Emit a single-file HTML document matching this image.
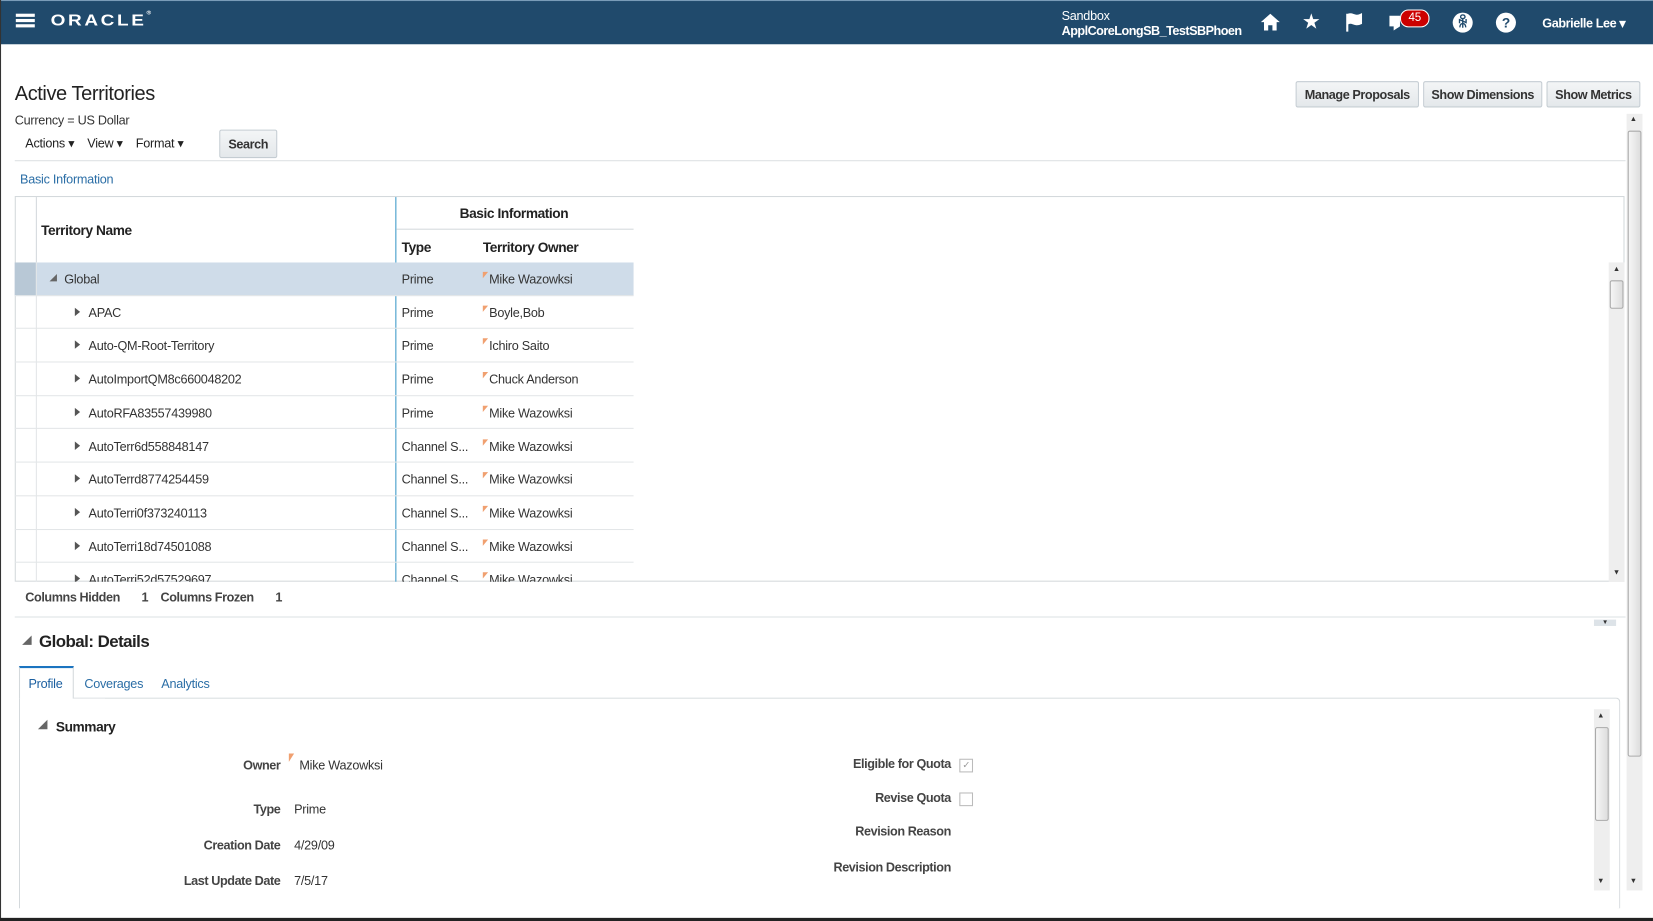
<!DOCTYPE html>
<html><head><meta charset="utf-8"><style>
body{margin:0;width:1653px;height:921px;overflow:hidden;background:#fff;font-family:"Liberation Sans",Arial,sans-serif;}
#w{position:absolute;left:0;top:0;width:1568px;height:874px;transform:scale(1.0542,1.0538);transform-origin:0 0;color:#333;font-size:12px;letter-spacing:-0.25px;}
b,.lbl,.btn{letter-spacing:-0.4px;}
.a{position:absolute;white-space:nowrap;}
.hdr{left:0;top:0;width:1568px;height:42px;background:#204a6c;border-top:1px solid #7a9cb8;box-sizing:border-box;}
.btn{position:absolute;top:77px;height:25px;border:1px solid #c4ccd2;border-radius:2px;background:linear-gradient(#f3f5f6,#e4e8eb);font-weight:bold;font-size:12px;color:#333;line-height:25px;text-align:center;box-sizing:border-box;}
.row{position:absolute;left:14px;width:587px;height:31.7px;border-bottom:1px solid #e3e6e8;box-sizing:border-box;}
.row span{position:absolute;top:9px;}
.tri{display:inline-block;width:0;height:0;border-left:5px solid #555;border-top:4px solid transparent;border-bottom:4px solid transparent;}
.flag{position:absolute;width:0;height:0;border-top:6px solid #f0a070;border-right:5px solid transparent;}
.sb{position:absolute;background:#eee;}
.thumb{position:absolute;background:linear-gradient(90deg,#f6f6f6,#ddd);border:1px solid #aaa;border-radius:2px;box-sizing:border-box;}
.lbl{position:absolute;font-weight:bold;color:#444;text-align:right;white-space:nowrap;}
</style></head><body><div id="w">
<div class="a hdr"></div>
<div class="a" style="left:15px;top:13px;width:18px;height:3px;background:#fff;box-shadow:0 5px 0 #fff,0 10px 0 #fff"></div>
<div class="a" style="left:48px;top:9px;color:#fff;font-size:18px;font-weight:bold;letter-spacing:2.5px;transform:scaleY(0.85)">ORACLE<span style="font-size:6px;vertical-align:top">®</span></div>
<div class="a" style="left:1007px;top:8px;color:#fff;font-size:12px">Sandbox</div>
<div class="a" style="left:1007px;top:22px;color:#fff;font-size:12px;font-weight:bold;letter-spacing:-0.5px">ApplCoreLongSB_TestSBPhoen</div>
<svg class="a" style="left:1195px;top:12px" width="20" height="18"><path d="M10 1L1 9h3v8h4v-5h4v5h4V9h3z" fill="#fff"/></svg>
<div class="a" style="left:1235px;top:8px;color:#fff;font-size:20px">★</div>
<svg class="a" style="left:1275px;top:11px" width="20" height="20"><path d="M3 2v17M4 3c4-2 6 3 12 0v8c-6 3-8-2-12 0z" stroke="#fff" stroke-width="2" fill="#fff"/></svg>
<svg class="a" style="left:1315px;top:13px" width="18" height="18"><path d="M3 2h10v10l-6 4v-4H3z" fill="#fff"/></svg>
<div class="a" style="left:1328px;top:9px;width:26px;height:15px;border-radius:8px;background:#c00;border:1px solid #fff;color:#fff;font-size:11px;text-align:center;line-height:15px">45</div>
<div class="a" style="left:1378px;top:12px;width:19px;height:19px;border-radius:50%;background:#fff;color:#204a6c;font-size:14px;text-align:center;line-height:19px;font-weight:bold">ꆜ</div>
<div class="a" style="left:1419px;top:12px;width:19px;height:19px;border-radius:50%;background:#fff;color:#204a6c;font-size:13px;text-align:center;line-height:19px;font-weight:bold">?</div>
<div class="a" style="left:1463px;top:15px;color:#fff;font-weight:bold;font-size:12px;letter-spacing:-0.4px">Gabrielle Lee ▾</div>

<div class="a" style="left:14px;top:79px;font-size:19px;color:#222;letter-spacing:-0.4px">Active Territories</div>
<div class="a" style="left:14px;top:107px;font-size:12px">Currency = US Dollar</div>
<div class="a" style="left:24px;top:129px;color:#222">Actions ▾ &nbsp;&nbsp;&nbsp;View ▾ &nbsp;&nbsp;&nbsp;Format ▾</div>
<div class="btn" style="left:208px;top:123px;width:55px;height:27px;line-height:27px">Search</div>
<div class="btn" style="left:1229px;width:117px">Manage Proposals</div>
<div class="btn" style="left:1350px;width:113px">Show Dimensions</div>
<div class="btn" style="left:1467px;width:89px">Show Metrics</div>
<div class="a" style="left:14px;top:152px;width:1528px;height:1px;background:#dde1e4"></div>
<div class="a" style="left:19px;top:163px;color:#2b6ea6">Basic Information</div>

<div class="a" style="left:14px;top:186px;width:1527px;height:366px;border:1px solid #d4d9dc;box-sizing:border-box"></div>
<div class="a" style="left:34px;top:187px;width:1px;height:62px;background:#d4d9dc"></div>
<div class="a" style="left:375px;top:187px;width:1px;height:365px;background:#3c9ac8"></div>
<div class="a" style="left:376px;top:217px;width:225px;height:1px;background:#d4d9dc"></div>
<div class="a" style="left:39px;top:211px;font-weight:bold;font-size:13px;color:#222;letter-spacing:-0.4px">Territory Name</div>
<div class="a" style="left:436px;top:195px;font-weight:bold;font-size:13px;color:#222;letter-spacing:-0.4px">Basic Information</div>
<div class="a" style="left:381px;top:227px;font-weight:bold;font-size:13px;color:#222;letter-spacing:-0.4px">Type</div>
<div class="a" style="left:458px;top:227px;font-weight:bold;font-size:13px;color:#222;letter-spacing:-0.4px">Territory Owner</div>

<div id="tb" style="position:absolute;left:0;top:249px;width:620px;height:303px;overflow:hidden">
<div class="row" style="top:0;background:#cfdce9"><div class="a" style="left:0;top:0;width:20px;height:31px;background:#b8c8d6"></div><span style="left:33px;top:11px;width:0;height:0;border-right:7px solid #666;border-top:7px solid transparent"></span><span style="left:47px">Global</span><span style="left:367px">Prime</span><div class="flag" style="left:444px;top:9px"></div><span style="left:450px">Mike Wazowksi</span></div>
</div>
<div class="a" style="left:15px;top:249px;width:19px;height:303px;border-right:1px solid #e3e6e8"></div>

<div class="sb" style="left:1526px;top:249px;width:15px;height:303px"></div>
<div class="a" style="left:1530px;top:252px;font-size:7px">▲</div>
<div class="thumb" style="left:1527px;top:266px;width:13px;height:27px"></div>
<div class="a" style="left:1530px;top:540px;font-size:7px">▼</div>

<div class="a" style="left:24px;top:560px;font-weight:bold;color:#444;letter-spacing:-0.4px">Columns Hidden &nbsp;&nbsp;&nbsp;&nbsp;&nbsp;&nbsp;1 &nbsp;&nbsp;&nbsp;Columns Frozen &nbsp;&nbsp;&nbsp;&nbsp;&nbsp;&nbsp;1</div>
<div class="a" style="left:14px;top:585px;width:1528px;height:1px;background:#dde1e4"></div>
<div class="a" style="left:1512px;top:588px;width:21px;height:6px;background:#dde3e8;font-size:6px;text-align:center;line-height:6px">▼</div>

<div class="a" style="left:21px;top:603px;width:0;height:0;border-right:9px solid #666;border-top:9px solid transparent"></div>
<div class="a" style="left:37px;top:601px;font-size:16px;font-weight:bold;color:#222;letter-spacing:-0.5px">Global: Details</div>
<div class="a" style="left:18px;top:632px;width:52px;height:31px;border-top:2px solid #1b74c0;border-left:1px solid #d4d9dc;border-right:1px solid #d4d9dc;background:#fff;z-index:2;box-sizing:border-box"></div>
<div class="a" style="left:27px;top:642px;color:#1b5fa0;z-index:3">Profile</div>
<div class="a" style="left:80px;top:642px;color:#2b6ea6">Coverages</div>
<div class="a" style="left:153px;top:642px;color:#2b6ea6">Analytics</div>
<div class="a" style="left:18px;top:662px;width:1519px;height:200px;border:1px solid #d4d9dc;border-bottom:none;border-radius:0 4px 0 0;box-sizing:border-box"></div>
<div class="a" style="left:36px;top:683px;width:0;height:0;border-right:9px solid #666;border-top:9px solid transparent"></div>
<div class="a" style="left:53px;top:682px;font-size:13px;font-weight:bold;color:#222;letter-spacing:-0.4px">Summary</div>

<div class="lbl" style="right:1302px;top:719px">Owner</div>
<div class="flag" style="left:274px;top:715px;border-top-width:8px"></div>
<div class="a" style="left:284px;top:719px">Mike Wazowksi</div>
<div class="lbl" style="right:1302px;top:761px">Type</div><div class="a" style="left:279px;top:761px">Prime</div>
<div class="lbl" style="right:1302px;top:795px">Creation Date</div><div class="a" style="left:279px;top:795px">4/29/09</div>
<div class="lbl" style="right:1302px;top:829px">Last Update Date</div><div class="a" style="left:279px;top:829px">7/5/17</div>
<div class="lbl" style="right:666px;top:718px">Eligible for Quota</div>
<div class="a" style="left:910px;top:720px;width:11px;height:11px;border:1px solid #bbb;font-size:9px;color:#999;line-height:11px;text-align:center">✓</div>
<div class="lbl" style="right:666px;top:750px">Revise Quota</div>
<div class="a" style="left:910px;top:752px;width:11px;height:11px;border:1px solid #bbb"></div>
<div class="lbl" style="right:666px;top:782px">Revision Reason</div>
<div class="lbl" style="right:666px;top:816px">Revision Description</div>

<div class="sb" style="left:1512px;top:673px;width:15px;height:172px"></div>
<div class="a" style="left:1515px;top:676px;font-size:7px">▲</div>
<div class="thumb" style="left:1513px;top:690px;width:13px;height:89px"></div>
<div class="a" style="left:1515px;top:833px;font-size:7px">▼</div>

<div class="sb" style="left:1543px;top:108px;width:15px;height:737px"></div>
<div class="a" style="left:1546px;top:110px;font-size:7px">▲</div>
<div class="thumb" style="left:1544px;top:124px;width:13px;height:594px"></div>
<div class="a" style="left:1546px;top:833px;font-size:7px">▼</div>

<div class="a" style="left:0;top:0;width:1px;height:874px;background:#333"></div>
<div class="a" style="left:0;top:871px;width:1568px;height:3px;background:#222"></div>
</div>
<script>
var d=[["APAC","Prime","Boyle,Bob"],["Auto-QM-Root-Territory","Prime","Ichiro Saito"],["AutoImportQM8c660048202","Prime","Chuck Anderson"],["AutoRFA83557439980","Prime","Mike Wazowksi"],["AutoTerr6d558848147","Channel S...","Mike Wazowksi"],["AutoTerrd8774254459","Channel S...","Mike Wazowksi"],["AutoTerri0f373240113","Channel S...","Mike Wazowksi"],["AutoTerri18d74501088","Channel S...","Mike Wazowksi"],["AutoTerri52d57529697","Channel S...","Mike Wazowksi"]];
var c=document.getElementById('tb'),h="";
d.forEach(function(r,i){var t=31.7*(i+1);h+='<div class="row" style="top:'+t+'px"><span class="tri" style="left:57px;top:11px"></span><span style="left:70px">'+r[0]+'</span><span style="left:367px">'+r[1]+'</span><div class="flag" style="left:444px;top:9px"></div><span style="left:450px">'+r[2]+'</span></div>';});
c.insertAdjacentHTML('beforeend',h);
</script>
</body></html>
